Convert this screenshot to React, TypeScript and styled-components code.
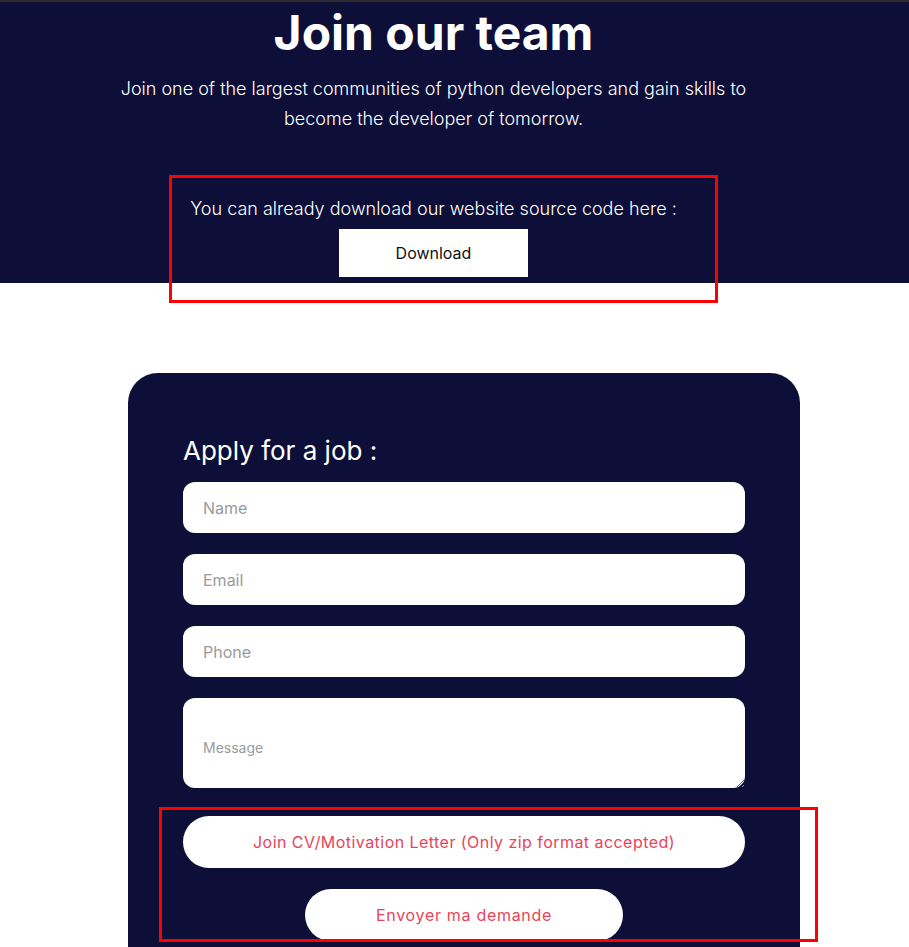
import React from "react";
import styled, { createGlobalStyle } from "styled-components";

const GlobalStyle = createGlobalStyle`
  html, body { margin: 0; padding: 0; background: #ffffff; }
  body { font-family: "Inter", "Open Sans", sans-serif; }
  * { box-sizing: border-box; }
`;

const NAVY = "#0d0f38";
const ACCENT = "#e8445a";

const Page = styled.div`
  position: relative;
  width: 909px;
  min-height: 947px;
  overflow: hidden;
`;

const Header = styled.header`
  background: ${NAVY};
  border-top: 2px solid #2c2c2e;
  height: 283px;
  padding: 3px 42px 0 0;
  display: flex;
  flex-direction: column;
  align-items: center;
  color: #ffffff;
`;

const Title = styled.h1`
  margin: 0;
  font-size: 48px;
  font-weight: 700;
  line-height: 56px;
`;

const Lead = styled.p`
  margin: 13px 0 0;
  width: 650px;
  text-align: center;
  font-size: 18px;
  font-weight: 300;
  line-height: 30px;
`;

const DownloadText = styled.p`
  margin: 63px 0 0;
  font-size: 18px;
  font-weight: 300;
  line-height: 24px;
`;

const DownloadButton = styled.button`
  margin-top: 8px;
  width: 189px;
  height: 48px;
  border: none;
  background: #ffffff;
  color: #111111;
  font-family: inherit;
  font-size: 16px;
  font-weight: 400;
`;

const Card = styled.section`
  margin: 90px 0 0 128px;
  width: 672px;
  height: 590px;
  background: ${NAVY};
  border-radius: 30px 30px 0 0;
  padding: 62px 55px 0;
  display: flex;
  flex-direction: column;
`;

const CardTitle = styled.h2`
  margin: 0 0 15px;
  color: #ffffff;
  font-size: 26px;
  font-weight: 400;
  line-height: 32px;
`;

const Form = styled.form`
  display: flex;
  flex-direction: column;
  gap: 21px;
  align-items: center;
`;

const Field = styled.input`
  width: 100%;
  height: 51px;
  border: none;
  border-radius: 12px;
  background: #ffffff;
  padding: 0 20px;
  font-family: inherit;
  font-size: 16px;
  color: #333;
  outline: none;
  &::placeholder { color: #9a9a9a; }
`;

const Message = styled.textarea`
  width: 100%;
  height: 90px;
  border: none;
  border-radius: 12px;
  background: #ffffff;
  padding: 40px 20px 0;
  font-family: inherit;
  font-size: 14px;
  line-height: 20px;
  color: #333;
  outline: none;
  resize: vertical;
  &::placeholder { color: #9a9a9a; }
`;

const PillButton = styled.button<{ $wide?: boolean }>`
  width: ${(p) => (p.$wide ? "100%" : "318px")};
  height: 52px;
  border: none;
  border-radius: 26px;
  background: #ffffff;
  color: ${ACCENT};
  font-family: inherit;
  font-size: 16px;
  font-weight: 400;
  letter-spacing: ${(p) => (p.$wide ? "0.45px" : "0.7px")};
  margin-top: ${(p) => (p.$wide ? "7px" : "0")};
  cursor: pointer;
`;

const Annotation = styled.div<{ $x: number; $y: number; $w: number; $h: number }>`
  position: absolute;
  left: ${(p) => p.$x}px;
  top: ${(p) => p.$y}px;
  width: ${(p) => p.$w}px;
  height: ${(p) => p.$h}px;
  border: 3px solid #ff0000;
  pointer-events: none;
`;

export default function App() {
  return (
    <Page>
      <GlobalStyle />
      <Header>
        <Title>Join our team</Title>
        <Lead>
          Join one of the largest communities of python developers and gain skills to become the
          developer of tomorrow.
        </Lead>
        <DownloadText>You can already download our website source code here :</DownloadText>
        <DownloadButton>Download</DownloadButton>
      </Header>
      <Card>
        <CardTitle>Apply for a job :</CardTitle>
        <Form onSubmit={(e) => e.preventDefault()}>
          <Field placeholder="Name" />
          <Field placeholder="Email" />
          <Field placeholder="Phone" />
          <Message placeholder="Message" />
          <PillButton type="button" $wide>
            Join CV/Motivation Letter (Only zip format accepted)
          </PillButton>
          <PillButton type="submit">Envoyer ma demande</PillButton>
        </Form>
      </Card>
      <Annotation $x={169} $y={175} $w={549} $h={128} />
      <Annotation $x={159} $y={807} $w={659} $h={135} />
    </Page>
  );
}
